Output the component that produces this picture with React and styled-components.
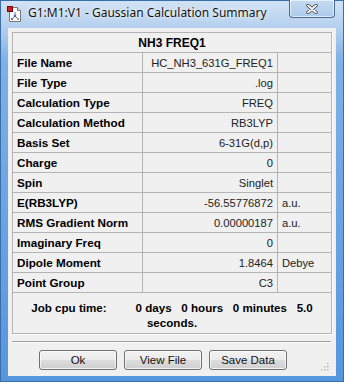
import React from "react";
import styled, { createGlobalStyle } from "styled-components";

const GlobalStyle = createGlobalStyle`
  html, body {
    margin: 0;
    padding: 0;
    background: #6aa3e2;
  }
`;

const rows = [
  ["File Name", "HC_NH3_631G_FREQ1", ""],
  ["File Type", ".log", ""],
  ["Calculation Type", "FREQ", ""],
  ["Calculation Method", "RB3LYP", ""],
  ["Basis Set", "6-31G(d,p)", ""],
  ["Charge", "0", ""],
  ["Spin", "Singlet", ""],
  ["E(RB3LYP)", "-56.55776872", "a.u."],
  ["RMS Gradient Norm", "0.00000187", "a.u."],
  ["Imaginary Freq", "0", ""],
  ["Dipole Moment", "1.8464", "Debye"],
  ["Point Group", "C3", ""],
];

const Window = styled.div`
  width: 344px;
  height: 382px;
  box-sizing: border-box;
  display: flex;
  flex-direction: column;
  padding: 0 8px 6px;
  background: linear-gradient(
    to bottom,
    #d2e3f5 0px,
    #b4cfee 28px,
    #7fb0e6 60px,
    #5596de 382px
  );
  box-shadow: inset 0 0 0 1px #3a6ea8;
`;

const TitleBar = styled.div`
  height: 28px;
  flex: none;
  display: flex;
  align-items: flex-start;
  margin: 0 -8px;
  padding: 0 9px 0 7px;
`;

const AppIcon = styled.svg`
  width: 15px;
  height: 16px;
  margin-top: 6px;
  flex: none;
`;

const Title = styled.div`
  margin: 4px 0 0 6px;
  font-family: "Noto Sans", "Open Sans", sans-serif;
  font-size: 12px;
  line-height: 17px;
  color: #111;
  text-shadow: 0 0 6px rgba(255, 255, 255, 0.9), 0 0 2px rgba(255, 255, 255, 0.8);
  white-space: nowrap;
`;

const CloseButton = styled.div`
  margin-left: auto;
  width: 46px;
  height: 18px;
  box-sizing: border-box;
  display: flex;
  align-items: center;
  justify-content: center;
  border: 1px solid #4a6d98;
  border-top: none;
  border-radius: 0 0 4px 4px;
  background: linear-gradient(to bottom, #c6dbf2, #adc9ea);
  box-shadow: inset 0 0 0 1px rgba(255, 255, 255, 0.6);
`;

const Client = styled.div`
  flex: 1;
  position: relative;
  display: flex;
  flex-direction: column;
  background: #f0f0f0;
  padding: 4px 5px 0 4px;
  font-family: "Liberation Sans", Arial, sans-serif;
  color: #000;
`;

const Summary = styled.table`
  width: 319px;
  border-collapse: collapse;
  table-layout: fixed;
  border: 1px solid #8e8e8e;
  box-shadow: 1px 1px 0 #ffffff;
`;

const HeaderCell = styled.th`
  height: 19px;
  padding: 0;
  border: 1px solid #b4b4b4;
  font-size: 12px;
  font-weight: bold;
  text-align: center;
`;

const Cell = styled.td`
  height: 19px;
  padding: 0 4px;
  border: 1px solid #b4b4b4;
  font-size: ${(p) => (p.$bold ? "11.7px" : "11.2px")};
  font-weight: ${(p) => (p.$bold ? "bold" : "normal")};
  text-align: ${(p) => p.$align || "left"};
  color: ${(p) => (p.$bold ? "#000" : "#222")};
  white-space: nowrap;
  overflow: hidden;
`;

const CpuCell = styled.td`
  height: 40px;
  padding: 0;
  border: 1px solid #b4b4b4;
  vertical-align: top;
`;

const CpuTime = styled.div`
  padding-top: 7px;
  font-size: 11.6px;
  font-weight: bold;
  line-height: 15px;
  text-align: center;
  white-space: pre;
`;

const Separator = styled.div`
  margin-top: 7px;
  width: 319px;
  height: 1px;
  background: #a0a0a0;
  border-bottom: 1px solid #ffffff;
`;

const ButtonRow = styled.div`
  display: flex;
  gap: 7px;
  margin: 7px 0 0 27px;
`;

const Button = styled.button`
  width: 78px;
  height: 20px;
  padding: 0;
  border: 1px solid #707070;
  border-radius: 3px;
  background: linear-gradient(
    to bottom,
    #f2f2f2 0%,
    #ebebeb 49%,
    #dddddd 50%,
    #cfcfcf 100%
  );
  box-shadow: inset 0 0 0 1px rgba(255, 255, 255, 0.7);
  font-family: "Liberation Sans", Arial, sans-serif;
  font-size: 11.5px;
  color: #111;
`;

const Grip = styled.svg`
  position: absolute;
  right: 7px;
  bottom: 5px;
  width: 9px;
  height: 9px;
`;

const Icon = () => (
  <AppIcon viewBox="0 0 15 16">
    <path d="M2.5 1.5h8l3 3v11h-11z" fill="#ffffff" stroke="#7a7a7a" />
    <path d="M10.5 1.5v3h3" fill="#e8e8e8" stroke="#7a7a7a" />
    <line x1="8" y1="6" x2="8" y2="10" stroke="#777" />
    <line x1="8" y1="10" x2="5" y2="13" stroke="#777" />
    <line x1="8" y1="10" x2="11" y2="13" stroke="#777" />
    <circle cx="8" cy="10" r="1.3" fill="#3a62c8" />
    <circle cx="5" cy="13" r="1.1" fill="#c83a3a" />
    <circle cx="11" cy="13" r="1.1" fill="#888" />
    <rect x="0.5" y="0.5" width="5" height="5" fill="#e01818" stroke="#6a0a0a" />
  </AppIcon>
);

const CloseGlyph = () => (
  <svg width="12" height="10" viewBox="0 0 12 10">
    <path d="M2 1.5l8 7M10 1.5l-8 7" stroke="#3b3b3b" strokeWidth="3.4" strokeLinecap="round" />
    <path d="M2 1.5l8 7M10 1.5l-8 7" stroke="#ffffff" strokeWidth="1.8" strokeLinecap="round" />
  </svg>
);

const App = () => {
  return (
    <React.Fragment>
      <GlobalStyle />
      <Window>
        <TitleBar>
          <Icon />
          <Title>G1:M1:V1 - Gaussian Calculation Summary</Title>
          <CloseButton>
            <CloseGlyph />
          </CloseButton>
        </TitleBar>
        <Client>
          <Summary>
            <colgroup>
              <col style={{ width: 130 }} />
              <col style={{ width: 135 }} />
              <col style={{ width: 54 }} />
            </colgroup>
            <thead>
              <tr>
                <HeaderCell colSpan={3}>NH3 FREQ1</HeaderCell>
              </tr>
            </thead>
            <tbody>
              {rows.map(([label, value, unit]) => (
                <tr key={label}>
                  <Cell $bold>{label}</Cell>
                  <Cell $align="right">{value}</Cell>
                  <Cell>{unit}</Cell>
                </tr>
              ))}
              <tr>
                <CpuCell colSpan={3}>
                  <CpuTime>
                    {"Job cpu time:         0 days   0 hours   0 minutes   5.0\nseconds."}
                  </CpuTime>
                </CpuCell>
              </tr>
            </tbody>
          </Summary>
          <Separator />
          <ButtonRow>
            <Button>Ok</Button>
            <Button>View File</Button>
            <Button>Save Data</Button>
          </ButtonRow>
          <Grip viewBox="0 0 9 9">
            {[
              [7, 1],
              [4, 4],
              [7, 4],
              [1, 7],
              [4, 7],
              [7, 7],
            ].map(([x, y]) => (
              <rect key={`${x}-${y}`} x={x} y={y} width="1.5" height="1.5" fill="#b8b8b8" />
            ))}
          </Grip>
        </Client>
      </Window>
    </React.Fragment>
  );
};

export default App;
